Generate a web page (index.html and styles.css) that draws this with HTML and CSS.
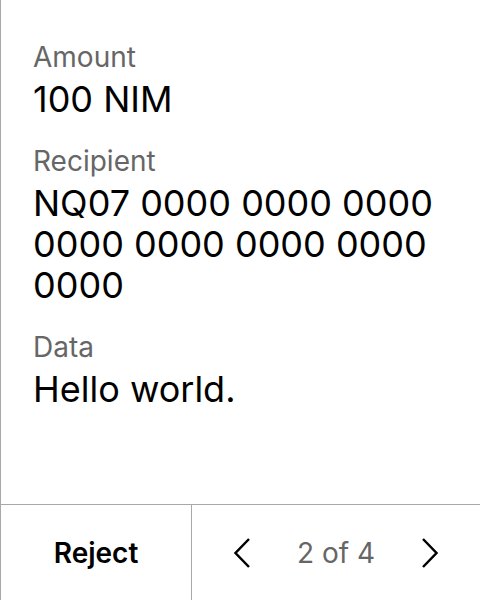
FILE: index.html
```html
<!DOCTYPE html>
<html>
<head>
<meta charset="utf-8">
<link rel="stylesheet" href="styles.css">
</head>
<body>
<div class="screen">
  <div class="content">
    <div class="field">
      <div class="label">Amount</div>
      <div class="value">100 NIM</div>
    </div>
    <div class="field">
      <div class="label">Recipient</div>
      <div class="value">NQ07 0000 0000 0000 0000 0000 0000 0000 0000</div>
    </div>
    <div class="field">
      <div class="label">Data</div>
      <div class="value">Hello world.</div>
    </div>
  </div>
  <div class="footer">
    <div class="reject">Reject</div>
    <div class="nav">
      <svg class="chev" width="20" height="32" viewBox="0 0 20 32"><path d="M17 2 L3.5 16 L17 30" fill="none" stroke="#000" stroke-width="2.5"/></svg>
      <span class="page">2 of 4</span>
      <svg class="chev" width="20" height="32" viewBox="0 0 20 32"><path d="M3 2 L16.5 16 L3 30" fill="none" stroke="#000" stroke-width="2.5"/></svg>
    </div>
  </div>
</div>
</body>
</html>
```

FILE: styles.css
```css
* { box-sizing: border-box; }
html, body { margin: 0; padding: 0; background: #fff; }
body { font-family: Inter, "Noto Sans", sans-serif; color: #000; }
.screen {
  width: 480px;
  height: 600px;
  border-left: 1px solid #a8a8a8;
  display: flex;
  flex-direction: column;
}
.content {
  flex: 1;
  padding: 39px 32px 0 32px;
  display: flex;
  flex-direction: column;
  gap: 23px;
}
.field {
  display: flex;
  flex-direction: column;
  gap: 4px;
}
.label {
  font-size: 28px;
  line-height: 36px;
  color: #666;
}
.value {
  font-size: 36px;
  line-height: 41px;
  color: #000;
}
.footer {
  height: 96px;
  border-top: 1px solid #a8a8a8;
  display: flex;
}
.reject {
  width: 191px;
  border-right: 1px solid #a8a8a8;
  display: flex;
  align-items: center;
  justify-content: center;
  font-size: 28px;
  font-weight: 600;
}
.nav {
  flex: 1;
  display: flex;
  align-items: center;
  justify-content: space-between;
  padding: 0 40px;
}
.page {
  font-size: 28px;
  color: #666;
}
```
